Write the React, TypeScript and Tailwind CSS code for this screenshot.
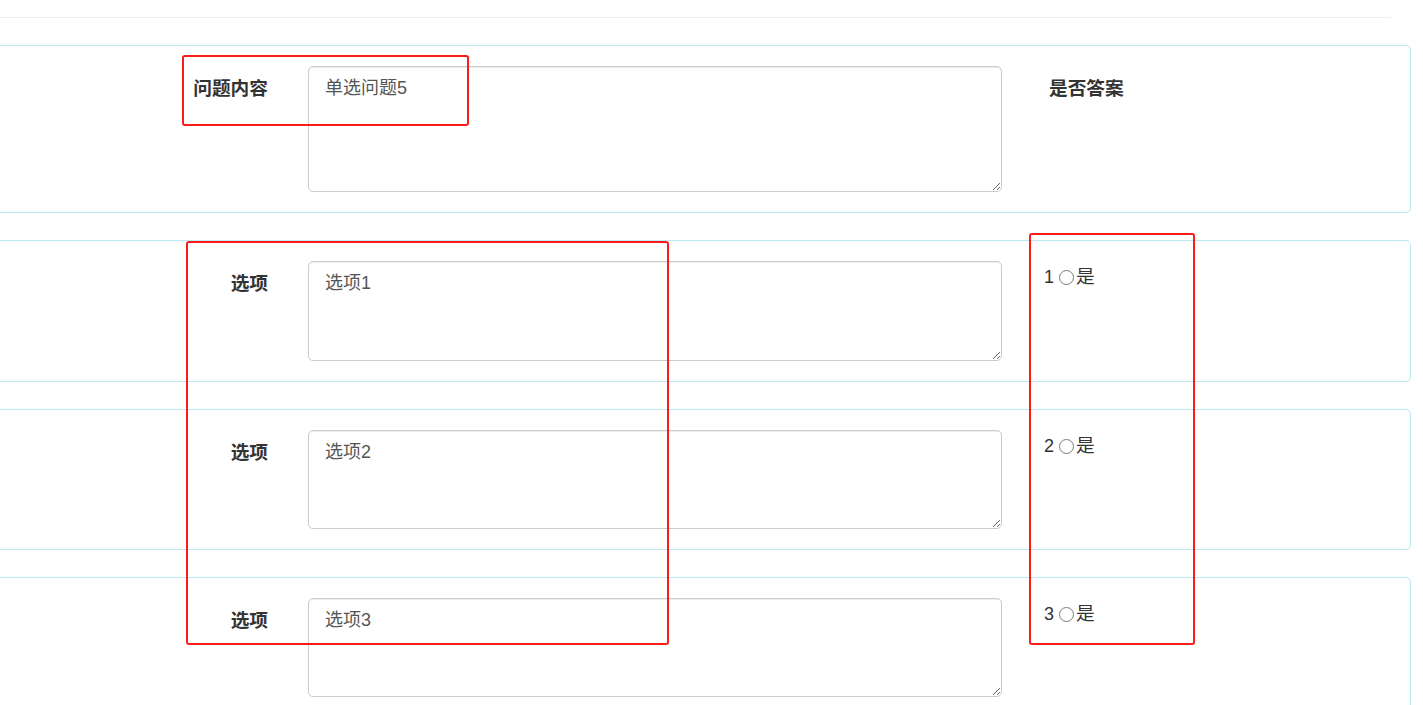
import React from "react";

const font = { fontFamily: '"Liberation Sans", "Noto Sans CJK SC", sans-serif' };

interface RowProps {
  label: string;
  value: string;
  boxHeight: string;
  right: React.ReactNode;
}

function PanelRow({ label, value, boxHeight, right }: RowProps) {
  return (
    <div className="-ml-[21px] mr-[12px] mb-[27px] rounded-[5px] border border-[#bce8f1] bg-white pl-[20px] py-[20px]">
      <div className="flex items-start">
        <div className="w-[268px] shrink-0 pt-[9px] text-right text-[18.7px] leading-[27px] font-bold text-[#333]">
          {label}
        </div>
        <textarea
          defaultValue={value}
          className={`ml-[40px] w-[694px] shrink-0 rounded-[5px] border border-[#ccc] px-[16px] py-[8px] text-[18px] leading-[27px] text-[#555] shadow-[inset_0_1px_1px_rgba(0,0,0,0.075)] outline-none ${boxHeight}`}
          style={font}
        />
        {right}
      </div>
    </div>
  );
}

function AnswerOption({ n }: { n: number }) {
  return (
    <div className="ml-[42px] flex items-center pt-[3px] text-[18px] leading-[26px] text-[#333]">
      <span>{n}</span>
      <input
        type="radio"
        name="answer"
        className="ml-[5px] mr-[2px] h-[15px] w-[15px] appearance-none rounded-full border border-[#7a7a7a] bg-white"
      />
      <span className="text-[18.7px]">是</span>
    </div>
  );
}

export default function App() {
  return (
    <div className="relative h-[705px] w-[1423px] overflow-hidden bg-white" style={font}>
      <div className="pt-[17px]">
        <div className="h-px w-[1391px] bg-[#eee]" />
      </div>

      <div className="mt-[27px]">
        <PanelRow
          label="问题内容"
          value="单选问题5"
          boxHeight="h-[126px]"
          right={
            <div className="ml-[47px] pt-[9px] text-[18.7px] leading-[27px] font-bold text-[#333]">是否答案</div>
          }
        />
        <PanelRow label="选项" value="选项1" boxHeight="h-[100px]" right={<AnswerOption n={1} />} />
        <PanelRow label="选项" value="选项2" boxHeight="h-[99px]" right={<AnswerOption n={2} />} />
        <PanelRow label="选项" value="选项3" boxHeight="h-[99px]" right={<AnswerOption n={3} />} />
      </div>

      {/* red annotation boxes drawn over the screenshot */}
      <div className="pointer-events-none absolute left-[182px] top-[55px] h-[71px] w-[287px] rounded-[3px] border-2 border-[#ff1a1a]" />
      <div className="pointer-events-none absolute left-[186px] top-[241px] h-[404px] w-[483px] rounded-[3px] border-2 border-[#ff1a1a]" />
      <div className="pointer-events-none absolute left-[1029px] top-[233px] h-[412px] w-[166px] rounded-[3px] border-2 border-[#ff1a1a]" />
    </div>
  );
}
